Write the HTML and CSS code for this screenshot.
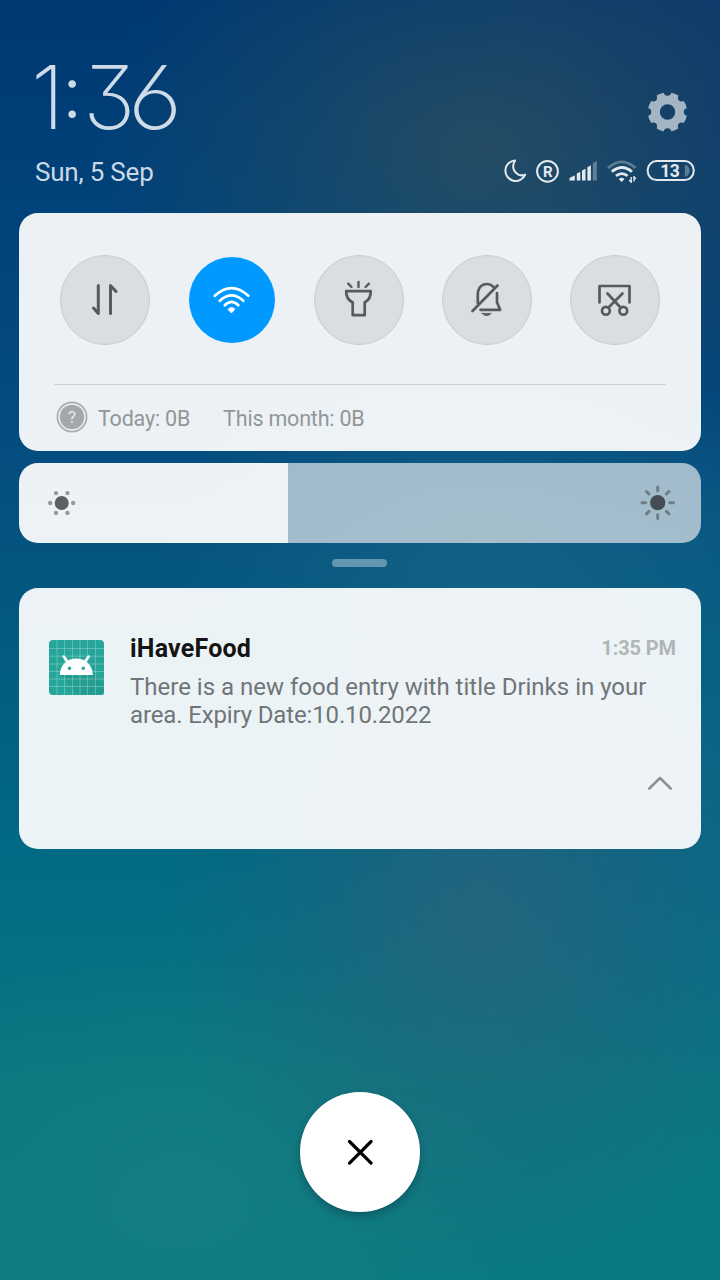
FILE: index.html
```html
<!DOCTYPE html>
<html lang="en">
<head>
<meta charset="utf-8">
<meta name="viewport" content="width=device-width">
<title>Notification shade</title>
<link rel="stylesheet" href="styles.css">
</head>
<body>
<div class="shade">
  <header class="header">
    <div class="clock-block">
      <div class="clock"><span class="one">1</span><span class="colon">:</span><span class="three">3</span><span class="six">6</span></div>
      <div class="date">Sun, 5 Sep</div>
    </div>
    <div class="system">
      <svg class="gear" width="40" height="40" viewBox="-19.500 -20 40 40">
        <mask id="notches" maskUnits="userSpaceOnUse" x="-20" y="-20" width="40" height="40">
          <circle r="20" fill="#fff"/>
          <circle r="7.700"/>
          <circle cx="20" r="3.700"/><circle cx="-20" r="3.700"/><circle cy="20" r="3.700"/><circle cy="-20" r="3.700"/>
          <circle cx="14.140" cy="14.140" r="3.700"/><circle cx="-14.140" cy="14.140" r="3.700"/><circle cx="14.140" cy="-14.140" r="3.700"/><circle cx="-14.140" cy="-14.140" r="3.700"/>
        </mask>
        <circle r="19.700" fill="#a3b4c4" mask="url(#notches)"/>
      </svg>
      <div class="status">
        <svg width="24" height="24" viewBox="504 159 24 24" fill="none" stroke="#e3e9ed" stroke-width="2" stroke-linejoin="round">
          <path d="M515 160.400A10.300 10.300 0 1 0 525.200 174.600C518 177.500 509.500 170 515 160.400Z"/>
        </svg>
        <svg width="24" height="24" viewBox="536 159 24 24">
          <circle cx="547.5" cy="171.300" r="10.400" fill="none" stroke="#e3e9ed" stroke-width="2"/>
          <text class="reg" x="547.800" y="176.700" text-anchor="middle">R</text>
        </svg>
        <svg width="30" height="24" viewBox="568 159 30 24" fill="#e3e9ed">
          <path d="M569.500 178l5.300-2.800v5.300h-5.300zM576.800 173.500l3.500-1.700v8.700h-3.500zM582 170.500l3.500-1.800v11.800H582zM587.400 167.200l3.500-2v15.300h-3.500z"/>
          <path opacity=".35" d="M592.800 163.200l4-2.500v19.800h-4z"/>
        </svg>
        <svg width="31" height="24" viewBox="606 159 31 24" fill="none" stroke="#e3e9ed" stroke-width="2.800">
          <path opacity=".35" d="M608 168Q622 155.700 635.500 168"/>
          <path d="M611.800 171.700Q622 163.200 632 171.700M616 175.900Q622 171.300 627.500 175.900"/>
          <path stroke="none" fill="#e3e9ed" d="M618.700 179Q621.500 176.600 624.500 179L621.600 182z"/>
          <path stroke-width="1.400" d="M631.200 177v6M634 176v5.500M629.200 180l2 2M636 179l-2-2"/>
        </svg>
        <svg class="battery" width="49" height="24" viewBox="646.300 159 49 24">
          <rect x="648" y="161.100" width="46" height="19" rx="9" fill="none" stroke="#e3e9ed" stroke-width="2"/>
          <path fill="#e3e9ed" opacity=".35" d="M685.200 165h1c5 1.500 5 9.500 0 11.500h-1z"/>
          <text class="charge" x="670" y="176.700" text-anchor="middle">13</text>
        </svg>
      </div>
    </div>
  </header>

  <section class="card toggles-card">
    <div class="toggles">
      <button class="toggle" aria-label="Mobile data">
        <svg width="50" height="50" viewBox="80 275 50 50" stroke-width="3">
          <path d="M98.300 285.500V313.500L93.500 308M110.500 313.500V285.500L116 291.500"/>
        </svg>
      </button>
      <button class="toggle on" aria-label="Wi-Fi">
        <svg width="50" height="50" viewBox="207 275 50 50" stroke-width="2.700">
          <path d="M214.800 295.800Q231.500 280.500 248.300 295.800M219.800 300.800Q231.500 289.800 243.300 300.800M224.800 305.200Q231.500 298.600 238.300 305.200"/>
          <path class="solid" d="M228.300 309.300Q231.500 305.700 234.900 309.300L231.600 312.700z"/>
        </svg>
      </button>
      <button class="toggle" aria-label="Torch">
        <svg width="50" height="50" viewBox="334 275 50 50" stroke-width="2.700">
          <path d="M346.200 291.200H370.700C371 297 369 300 364.700 302.500V315.200H352.700V302.500C348 300 346 297 346.200 291.200Z"/>
          <path stroke-width="2.400" d="M348.200 283.700l3.300 3.300M358.500 282v5M368.900 283.700l-3.300 3.300"/>
        </svg>
      </button>
      <button class="toggle" aria-label="Mute">
        <svg width="50" height="50" viewBox="462 275 50 50" stroke-width="2.700">
          <path d="M472.500 311L497.500 285.500M477.800 303V295C477.800 283 488.500 282 493.300 286.800M497 293V302.500L500.200 309.800H480.500"/>
          <path class="solid" stroke-width=".5" d="M481.800 313.300H491.500Q486.500 318.300 481.800 313.300z"/>
        </svg>
      </button>
      <button class="toggle" aria-label="Screenshot">
        <svg width="50" height="50" viewBox="590 275 50 50" stroke-width="2.700">
          <path d="M599.500 302.500V286H629.500V302.500M607.500 293.500L620.500 307.500M622.500 293.500L608.500 307.500"/>
          <circle cx="605.900" cy="310.800" r="3.900"/><circle cx="623.300" cy="310.800" r="3.900"/>
        </svg>
      </button>
    </div>
    <div class="usage">
      <svg width="32" height="32" viewBox="-16 -16 32 32">
        <circle r="14.600" fill="none" stroke="#a9acae" stroke-width="1.700"/>
        <circle r="12.200" fill="#a5a8aa"/>
        <text class="help" y="5.800" text-anchor="middle">?</text>
      </svg>
      <span class="today">Today: 0B</span>
      <span class="month">This month: 0B</span>
    </div>
  </section>

  <div class="brightness">
    <svg width="30" height="30" viewBox="-14.700 -15 30 30" fill="#95999b">
      <circle r="7" fill="#5d5f61"/>
      <circle cx="-11.500" r="2.200"/><circle cx="11.500" r="2.200"/>
      <circle cx="-5.700" cy="-9.900" r="2.200"/><circle cx="5.700" cy="-9.900" r="2.200"/>
      <circle cx="-5.700" cy="9.900" r="2.200"/><circle cx="5.700" cy="9.900" r="2.200"/>
    </svg>
    <svg width="36" height="36" viewBox="-17.700 -17.700 36 36" fill="none" stroke="#6f7e86" stroke-width="3" stroke-linecap="round">
      <circle r="7.600" fill="#444d53" stroke="none"/>
      <path d="M0-15.800v3.800M0 12v3.800M-15.800 0h3.800M12 0h3.800M-11.200-11.200l2.500 2.500M8.700 8.700l2.500 2.500M-11.200 11.200l2.500-2.500M8.700-8.700l2.500-2.500"/>
    </svg>
  </div>

  <div class="handle"></div>

  <article class="card notice">
    <svg class="app-icon" width="55" height="55" viewBox="0 0 55 55">
      <rect width="55" height="55" rx="4" fill="#26a69a"/>
      <path fill="#219387" d="M11 34.500L43.500 34.500L55 43V55H30z" opacity=".5"/>
      <path fill="none" stroke="#fff" stroke-opacity=".25" stroke-width="1" d="M8 0v55M15.500 0v55M23.500 0v55M31 0v55M38.500 0v55M46.500 0v55M0 8.500h55M0 16.200h55M0 24h55M0 31.500h55M0 39h55M0 46.500h55"/>
      <path fill="#fff" d="M10.700 35C11.500 13 43 13 43.900 35z"/>
      <path fill="none" stroke="#fff" stroke-width="2.600" stroke-linecap="round" d="M14.700 16.500l4 5.500M39.700 16.500l-4 5.500"/>
      <circle cx="20.500" cy="28.300" r="1.700" fill="#26a69a"/><circle cx="34.300" cy="28.300" r="1.700" fill="#26a69a"/>
    </svg>
    <div class="notice-body">
      <div class="notice-head"><h1 class="title">iHaveFood</h1><time class="time">1:35 PM</time></div>
      <p class="message">There is a new food entry with title Drinks in your<br><span class="expiry">area. Expiry Date:10.10.2022</span></p>
      <svg class="collapse" width="26" height="16" viewBox="-13 -8 26 16" fill="none" stroke="#8d9193" stroke-width="2.600" stroke-linecap="round" stroke-linejoin="round"><path d="M-10.700 5.500L0-5L10.700 5.500"/></svg>
    </div>
  </article>

  <button class="close" aria-label="Clear all">
    <svg width="30" height="30" viewBox="-15.300 -15.300 30 30" fill="none" stroke="#000" stroke-width="3.200" stroke-linecap="round"><path d="M-10.800-10.800L10.800 10.800M10.800-10.800L-10.800 10.800"/></svg>
  </button>
</div>
</body>
</html>
```
FILE: styles.css
```css
* { box-sizing: border-box; }
body { margin: 0; font-family: Roboto, sans-serif; }
h1, p { margin: 0; }
button { border: 0; padding: 0; }
svg { display: block; flex: none; }

.shade {
  width: 720px;
  height: 1280px;
  padding: 0 19px;
  display: flex;
  flex-direction: column;
  background:
    radial-gradient(ellipse 380px 300px at 480px 150px, rgba(58, 84, 88, .62), rgba(44, 80, 92, .38) 50%, transparent),
    radial-gradient(ellipse 320px 200px at 480px 540px, rgba(30, 106, 138, .55), transparent),
    radial-gradient(ellipse 320px 380px at 480px 910px, rgba(56, 95, 122, .6), rgba(46, 95, 122, .34) 50%, transparent),
    radial-gradient(ellipse 350px 250px at 180px 1200px, rgba(30, 130, 132, .5), transparent),
    radial-gradient(ellipse 260px 500px at 720px 0, rgba(14, 54, 107, .8), transparent),
    radial-gradient(ellipse 300px 400px at 720px 800px, rgba(16, 102, 138, .5), transparent),
    linear-gradient(180deg, #003872 0, #00427a 200px, #044d80 450px, #04597f 620px, #006a84 850px, #087880 1080px, #087a82 1280px);
}

.header {
  height: 213px;
  flex: none;
  padding: 53px 6px 0 16px;
  display: flex;
  justify-content: space-between;
}
.clock {
  height: 88px;
  display: flex;
  font: 200 88px/88px Inter, sans-serif;
  font-feature-settings: "cv09", "cv03";
  color: #cfdce7;
}
.one { width: 31px; margin-left: -4px; }
.colon { width: 24px; font-size: 72px; font-weight: 300; line-height: 78px; }
.three { width: 47px; margin-left: -3px; }
.six { transform: scaleX(1.09); }
.date { margin-top: 16px; font-size: 26px; line-height: 30px; color: #cbd9e4; letter-spacing: -.2px; }
.system { display: flex; flex-direction: column; align-items: flex-end; padding-top: 39px; }
.gear { margin-right: 7px; }
.status { margin-top: 27px; display: flex; gap: 8px; }
.battery { margin-left: 1px; }
.reg { font: 700 15px Roboto, sans-serif; fill: #e3e9ed; }
.charge { font: 700 17.500px Roboto, sans-serif; fill: #e3e9ed; letter-spacing: -.5px; }

.card { border-radius: 19px; background: rgba(255, 255, 255, .925); flex: none; }
.toggles-card { height: 238px; padding: 42px 35px 0; }
.toggles {
  height: 130px;
  display: grid;
  grid-template-columns: 127px 127px 128px 128px 90px;
  padding: 0 6px;
  border-bottom: 1px solid #cdd1d4;
}
.toggle {
  width: 90px;
  height: 90px;
  border-radius: 50%;
  border: 1.500px solid #c9cccf;
  background: #dadee1;
  display: grid;
  place-items: center;
}
.toggle.on { width: 86px; height: 86px; margin: 2px; border: 0; background: #0099ff; }
.toggle svg { fill: none; stroke: #58595b; stroke-linecap: round; stroke-linejoin: round; }
.toggle.on svg { stroke: #fff; }
.toggle .solid { fill: #58595b; }
.toggle.on .solid { fill: #fff; stroke-width: 1px; }
.usage { display: flex; align-items: center; height: 64px; padding-left: 2px; font-size: 21.500px; letter-spacing: -.2px; color: #929698; }
.today { margin: 2px 0 0 10px; }
.month { margin: 2px 0 0 33px; }
.help { font: 400 17px Roboto, sans-serif; fill: #e6eaed; }

.brightness {
  height: 80px;
  flex: none;
  margin-top: 12px;
  padding: 0 25px 0 28px;
  border-radius: 19px;
  display: flex;
  align-items: center;
  justify-content: space-between;
  background: linear-gradient(90deg, rgba(255, 255, 255, .925) 269px, rgba(227, 231, 235, .7) 269px);
}
.handle { width: 55px; height: 8px; flex: none; margin: 16px 0 21px 313px; border-radius: 4px; background: #6397b0; }

.notice { height: 261px; padding: 52px 25px 0 30px; display: flex; }
.notice-body { flex: 1; margin-left: 26px; margin-top: -7px; display: flex; flex-direction: column; }
.notice-head { display: flex; justify-content: space-between; align-items: center; height: 30px; }
.title { font-size: 25px; font-weight: 700; letter-spacing: .2px; color: #141414; }
.time { font-size: 20px; font-weight: 700; letter-spacing: -.1px; color: #b0b5b7; }
.message { margin-top: 10px; font-size: 24px; line-height: 28px; color: #707577; white-space: nowrap; }
.expiry { letter-spacing: -.14px; }
.collapse { align-self: flex-end; margin: 46px 3px 0 0; }

.close {
  width: 120px;
  height: 120px;
  flex: none;
  margin: 243px auto 0;
  border-radius: 50%;
  background: #fff;
  box-shadow: 0 4px 8px rgba(0, 0, 0, .25);
  display: grid;
  place-items: center;
}
```
